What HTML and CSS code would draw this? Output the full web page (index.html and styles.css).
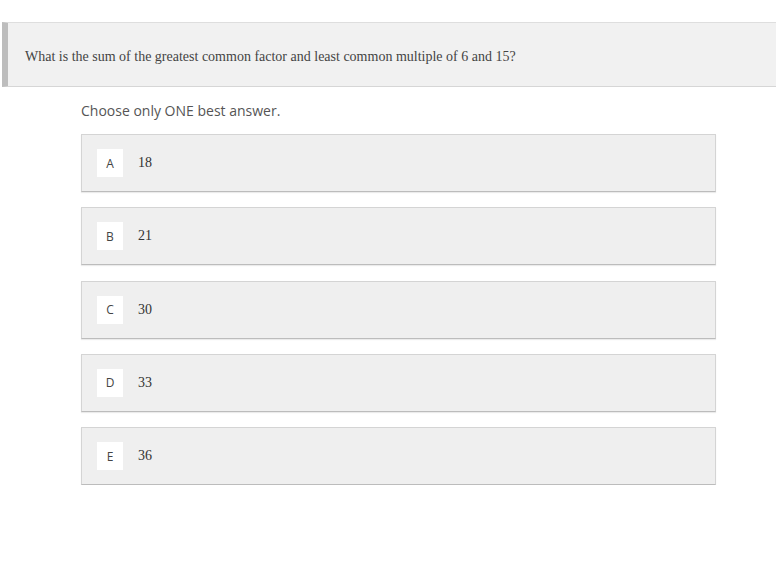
FILE: index.html
```html
<!DOCTYPE html>
<html>
<head>
<meta charset="utf-8">
<link rel="stylesheet" href="styles.css">
</head>
<body>
<div class="question">What is the sum of the greatest common factor and least common multiple of 6 and 15?</div>
<div class="content">
  <div class="instruction">Choose only ONE best answer.</div>
  <div class="options">
    <div class="option"><span class="letter">A</span><span class="value">18</span></div>
    <div class="option"><span class="letter">B</span><span class="value">21</span></div>
    <div class="option"><span class="letter">C</span><span class="value">30</span></div>
    <div class="option"><span class="letter">D</span><span class="value">33</span></div>
    <div class="option"><span class="letter">E</span><span class="value">36</span></div>
  </div>
</div>
</body>
</html>
```
FILE: styles.css
```css
html, body {
  margin: 0;
  padding: 0;
  background: #ffffff;
}
.question {
  margin: 22px 0 0 2px;
  height: 59px;
  padding-top: 4px;
  display: flex;
  align-items: center;
  padding-left: 17px;
  background: #f1f1f1;
  border-left: 6px solid #bdbdbd;
  border-top: 1px solid #dedede;
  border-bottom: 1px solid #d6d6d6;
  font-family: "Liberation Serif", "Times New Roman", serif;
  font-size: 14px;
  color: #444;
}
.content {
  margin-left: 81px;
  width: 635px;
}
.instruction {
  font-family: "Open Sans", sans-serif;
  font-size: 14px;
  color: #555;
  margin-top: 13px;
  line-height: 22px;
}
.options {
  margin-top: 12px;
  display: flex;
  flex-direction: column;
  gap: 15.3px;
}
.option {
  height: 58px;
  box-sizing: border-box;
  background: #efefef;
  border: 1px solid #d4d4d4;
  border-bottom: 1px solid #bcbcbc;
  box-shadow: 0 1px 1px rgba(0,0,0,0.08);
  display: flex;
  align-items: center;
  padding-left: 15px;
}
.letter {
  width: 26px;
  height: 28px;
  background: #ffffff;
  display: flex;
  align-items: center;
  justify-content: center;
  font-family: "Open Sans", sans-serif;
  font-size: 12px;
  color: #444;
}
.value {
  margin-left: 15px;
  font-family: "Liberation Serif", "Times New Roman", serif;
  font-size: 14px;
  color: #333;
}
```
